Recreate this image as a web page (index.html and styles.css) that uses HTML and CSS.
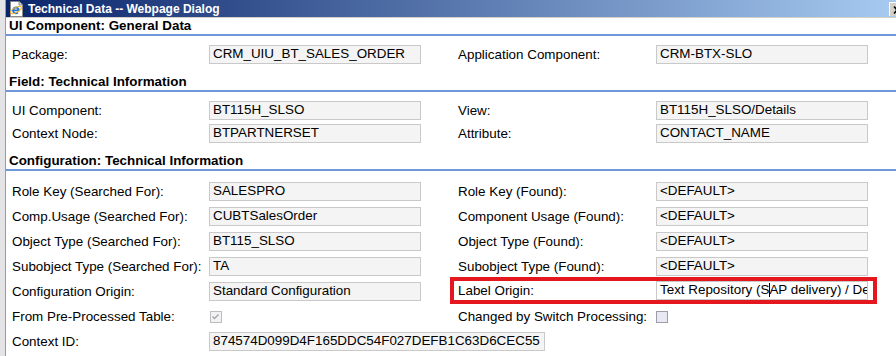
FILE: index.html
```html
<!DOCTYPE html>
<html lang="en">
<head>
    <meta charset="UTF-8">
    <title>Technical Data -- Webpage Dialog</title>
    <link rel="stylesheet" href="styles.css">
</head>
<body>
    <div class="desk">
        <div class="behind"></div>
        <div class="window">
            <div class="titlebar">
                <svg class="app-icon" viewBox="0 0 14 16" width="14" height="16">
                    <path d="M1.5 0.5H10L13.5 4V15.5H1.5Z" fill="#fff" stroke="#8a8a8a"/>
                    <path d="M10 0.5V4H13.5" fill="#dcdcdc" stroke="#8a8a8a"/>
                    <path d="M4 9.3h5.8a2.9 2.9 0 1 0 -0.9 2.2" fill="none" stroke="#2470d4" stroke-width="1.8"/>
                    <ellipse cx="7" cy="9" rx="6" ry="2.4" transform="rotate(-30 7 9)" fill="none" stroke="#f2b21c" stroke-width="1"/>
                </svg>
                <span class="title">Technical Data -- Webpage Dialog</span>
                <span class="close">
                    <svg viewBox="0 0 16 14" width="16" height="14">
                        <path d="M4 3.5L10 10.5M10 3.5L4 10.5" stroke="#000" stroke-width="1.6"/>
                    </svg>
                </span>
            </div>

            <div class="sec-head">UI Component: General Data</div>
            <div class="sec-body general">
                <div class="row row-s">
                    <span class="lbl">Package:</span>
                    <span class="fld">CRM_UIU_BT_SALES_ORDER</span>
                    <div class="pair">
                        <span class="lbl2">Application Component:</span>
                        <span class="fld">CRM-BTX-SLO</span>
                    </div>
                </div>
            </div>

            <div class="sec-head">Field: Technical Information</div>
            <div class="sec-body field">
                <div class="row row-m">
                    <span class="lbl">UI Component:</span>
                    <span class="fld">BT115H_SLSO</span>
                    <div class="pair">
                        <span class="lbl2">View:</span>
                        <span class="fld">BT115H_SLSO/Details</span>
                    </div>
                </div>
                <div class="row row-m">
                    <span class="lbl">Context Node:</span>
                    <span class="fld">BTPARTNERSET</span>
                    <div class="pair">
                        <span class="lbl2">Attribute:</span>
                        <span class="fld">CONTACT_NAME</span>
                    </div>
                </div>
            </div>

            <div class="sec-head">Configuration: Technical Information</div>
            <div class="sec-body config">
                <div class="row">
                    <span class="lbl">Role Key (Searched For):</span>
                    <span class="fld">SALESPRO</span>
                    <div class="pair">
                        <span class="lbl2">Role Key (Found):</span>
                        <span class="fld">&lt;DEFAULT&gt;</span>
                    </div>
                </div>
                <div class="row">
                    <span class="lbl">Comp.Usage (Searched For):</span>
                    <span class="fld">CUBTSalesOrder</span>
                    <div class="pair">
                        <span class="lbl2">Component Usage (Found):</span>
                        <span class="fld">&lt;DEFAULT&gt;</span>
                    </div>
                </div>
                <div class="row">
                    <span class="lbl">Object Type (Searched For):</span>
                    <span class="fld">BT115_SLSO</span>
                    <div class="pair">
                        <span class="lbl2">Object Type (Found):</span>
                        <span class="fld">&lt;DEFAULT&gt;</span>
                    </div>
                </div>
                <div class="row">
                    <span class="lbl">Subobject Type (Searched For):</span>
                    <span class="fld">TA</span>
                    <div class="pair">
                        <span class="lbl2">Subobject Type (Found):</span>
                        <span class="fld">&lt;DEFAULT&gt;</span>
                    </div>
                </div>
                <div class="row">
                    <span class="lbl">Configuration Origin:</span>
                    <span class="fld">Standard Configuration</span>
                    <div class="pair marked">
                        <span class="lbl2">Label Origin:</span>
                        <span class="fld focus">Text Repository (S<span class="caret"></span>AP delivery) / Default Text</span>
                    </div>
                </div>
                <div class="row">
                    <span class="lbl">From Pre-Processed Table:</span>
                    <span class="slot">
                        <span class="chk on">
                            <svg viewBox="0 0 11 11" width="11" height="11">
                                <path d="M2.5 5.5L4.5 7.5L8.5 3.5" fill="none" stroke="#a3a3a8" stroke-width="1.3"/>
                            </svg>
                        </span>
                    </span>
                    <div class="pair">
                        <span class="lbl2">Changed by Switch Processing:</span>
                        <span class="slot"><span class="chk"></span></span>
                    </div>
                </div>
                <div class="row">
                    <span class="lbl">Context ID:</span>
                    <span class="fld wide">874574D099D4F165DDC54F027DEFB1C63D6CEC55</span>
                </div>
            </div>
        </div>
    </div>
</body>
</html>
```

FILE: styles.css
```css
html, body {
    margin: 0;
    height: 100%;
    overflow: hidden;
}

body {
    font-family: "Liberation Sans", Arial, sans-serif;
    font-size: 13.4px;
    color: #000;
    background: #fff;
}

.desk {
    display: flex;
    height: 356px;
}

.behind {
    width: 5px;
    flex: none;
    background: #e4e4e6;
}

.window {
    flex: 1;
    min-width: 0;
    border-left: 1px solid #9a9a9a;
    background: #fff;
}

/* Title bar */
.titlebar {
    display: flex;
    align-items: center;
    height: 17px;
    border-bottom: 1px solid #d4d0c8;
    background: linear-gradient(to right, #0a246a, #a6caf0);
    overflow: hidden;
}

.app-icon {
    flex: none;
    margin-left: 3px;
    margin-right: 5px;
}

.title {
    color: #fff;
    font-weight: bold;
    font-size: 12px;
    white-space: nowrap;
}

.close {
    flex: none;
    margin-left: auto;
    width: 7px;
    height: 14px;
    overflow: hidden;
    box-sizing: border-box;
    background: #d4d0c8;
    border-top: 1px solid #fff;
    border-left: 1px solid #fff;
}

.close svg {
    display: block;
}

/* Sections */
.sec-head {
    height: 16px;
    line-height: 16px;
    padding-left: 3px;
    font-weight: bold;
    white-space: nowrap;
    border-bottom: 2px solid #6f97db;
}

.general {
    padding: 7px 0 9px;
}

.field {
    padding: 7px 0 8px;
}

.config {
    padding-top: 8px;
}

.row {
    display: flex;
    align-items: center;
    height: 25px;
    padding-left: 6px;
}

.row-s {
    height: 22px;
}

.row-m {
    height: 23px;
}

.lbl {
    flex: none;
    width: 197px;
    white-space: nowrap;
}

.fld {
    flex: none;
    width: 212px;
    height: 19px;
    box-sizing: border-box;
    border: 1px solid #c9c9c9;
    background: #f4f4f4;
    padding: 0 3px;
    line-height: 16px;
    white-space: nowrap;
    overflow: hidden;
}

.fld.wide {
    width: 336px;
}

.fld.focus {
    background: #fff;
}

.caret {
    display: inline-block;
    width: 1px;
    height: 14px;
    margin-right: -1px;
    background: #000;
    vertical-align: -3px;
}

.pair {
    flex: none;
    display: flex;
    align-items: center;
    box-sizing: border-box;
    width: 419px;
    margin-left: 33px;
    padding-left: 4px;
}

.pair.marked {
    height: 19px;
    margin-bottom: 2px;
    outline: 4px solid #e4161e;
}

.lbl2 {
    flex: none;
    width: 198px;
    white-space: nowrap;
}

.slot {
    flex: none;
    width: 212px;
    display: flex;
    align-items: center;
}

.chk {
    width: 12px;
    height: 12px;
    box-sizing: border-box;
    border: 1px solid #9c9cab;
    background: #e8e8f2;
}

.chk.on {
    margin-left: 1px;
    border-color: #bdbdc2;
    background: #f2f2f2;
}

.chk svg {
    display: block;
    margin: -1px 0 0 -1px;
}
```
